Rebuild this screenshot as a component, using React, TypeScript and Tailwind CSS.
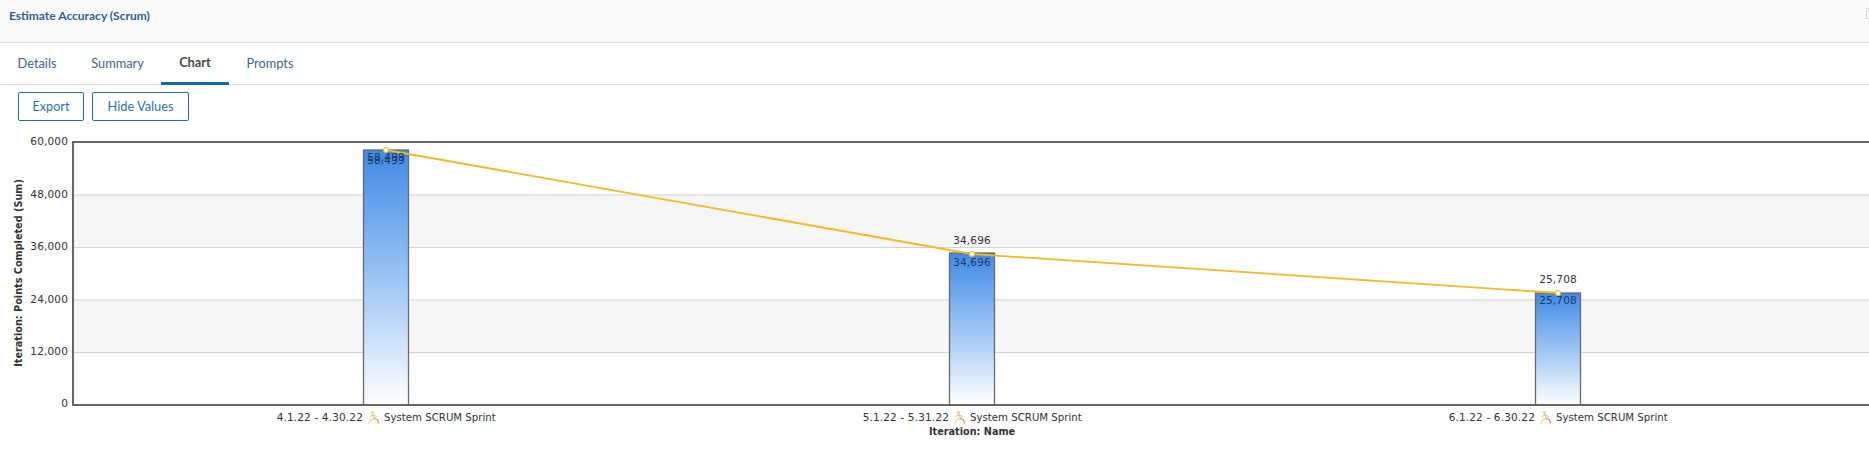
import React from 'react';

const tabs = [
  { label: 'Details', w: 'w-[74px]' },
  { label: 'Summary', w: 'w-[87px]' },
  { label: 'Chart', w: 'w-[68px]', active: true },
  { label: 'Prompts', w: 'w-[82px]' },
];

const ticks = [
  { label: '60,000', y: 142, labelY: 141.5 },
  { label: '48,000', y: 195, labelY: 194.5 },
  { label: '36,000', y: 247.5, labelY: 246.5 },
  { label: '24,000', y: 300, labelY: 299.5 },
  { label: '12,000', y: 352.5, labelY: 351.5 },
  { label: '0', y: 405, labelY: 403 },
];

const bars = [
  { x: 386, top: 150, value: '58,499', range: '4.1.22 - 4.30.22', above: 157, inside: 160 },
  { x: 972, top: 253, value: '34,696', range: '5.1.22 - 5.31.22', above: 240, inside: 262 },
  { x: 1558, top: 293, value: '25,708', range: '6.1.22 - 6.30.22', above: 279, inside: 300 },
];

// little running figure next to the sprint names
function Runner({ x, y }: { x: number; y: number }) {
  return (
    <g transform={`translate(${x} ${y})`} fill="none" strokeLinecap="round" strokeLinejoin="round">
      <circle cx="4.5" cy="1.6" r="1.5" fill="#e8c98f" />
      <path d="M4.5 3 L6.3 7.2 L2.5 9 L1 12" stroke="#ecd9b8" strokeWidth="1.6" />
      <path d="M6.3 7.2 L9.5 9 L10.5 12" stroke="#cfa56a" strokeWidth="1.4" />
      <path d="M4.8 4 L2 5.5 M5.2 4 L8.5 5.5" stroke="#dcbd8c" strokeWidth="1" />
    </g>
  );
}

function Chart() {
  return (
    <svg viewBox="0 130 1869 324" className="block w-[1869px] h-[324px] font-['DejaVu_Sans',sans-serif]">
      <defs>
        <linearGradient id="barFill" x1="0" y1="0" x2="0" y2="1">
          <stop offset="0" stopColor="#3f8ae6" />
          <stop offset="0.55" stopColor="#a5caf5" />
          <stop offset="1" stopColor="#ffffff" />
        </linearGradient>
      </defs>

      <rect x="73" y="195" width="1796" height="52.5" fill="#f6f6f6" />
      <rect x="73" y="300" width="1796" height="52.5" fill="#f6f6f6" />
      {ticks.slice(1, 5).map((t) => (
        <line key={t.label} x1="73" x2="1869" y1={t.y} y2={t.y} stroke="#d2d2d2" strokeWidth="1.2" />
      ))}

      {bars.map((b) => (
        <rect
          key={b.x}
          x={b.x - 22.5}
          y={b.top}
          width="45"
          height={405 - b.top}
          fill="url(#barFill)"
          stroke="#666a70"
          strokeWidth="1.3"
        />
      ))}

      <line x1="73" x2="1869" y1="142" y2="142" stroke="#666" strokeWidth="2" />
      <line x1="73" x2="1869" y1="405" y2="405" stroke="#666" strokeWidth="2" />
      <line x1="73" x2="73" y1="141" y2="406" stroke="#666" strokeWidth="2" />

      <polyline points="386,150 972,254 1558,293" fill="none" stroke="#f1ba1e" strokeWidth="1.8" />
      {bars.map((b) => (
        <circle key={b.x} cx={b.x} cy={b.top + (b.x === 972 ? 1 : 0)} r="2.6" fill="#fdfbe9" stroke="#f1ba1e" strokeWidth="1" />
      ))}

      {ticks.map((t) => (
        <text key={t.label} x="68" y={t.labelY} dy="0.35em" textAnchor="end" fontSize="10.5" letterSpacing="0.15" fill="#333">
          {t.label}
        </text>
      ))}

      {bars.map((b) => (
        <g key={b.x} fontSize="10.5" letterSpacing="0.15">
          <text x={b.x} y={b.above} dy="0.35em" textAnchor="middle" fill={b.above < b.top ? '#333' : '#1c3a5e'}>{b.value}</text>
          <text x={b.x} y={b.inside} dy="0.35em" textAnchor="middle" fill="#1c3a5e">{b.value}</text>
          <text x={b.x - 23} y="417.5" dy="0.35em" textAnchor="end" fill="#333">{b.range}</text>
          <Runner x={b.x - 18} y={411} />
          <text x={b.x - 2} y="417.5" dy="0.35em" fontSize="10.2" letterSpacing="0" fill="#333">System SCRUM Sprint</text>
        </g>
      ))}

      <text x="972" y="431.5" dy="0.35em" textAnchor="middle" fontSize="9.7" fontWeight="700" fill="#333">Iteration: Name</text>
      <text transform="translate(19 273) rotate(-90)" dy="0.35em" textAnchor="middle" fontSize="9.7" fontWeight="700" fill="#333">
        Iteration: Points Completed (Sum)
      </text>
    </svg>
  );
}

export default function App() {
  return (
    <div className="w-[1869px] h-[454px] overflow-hidden bg-white font-['Lato',sans-serif]">
      <div className="h-[43px] bg-[#fafafa] border-b border-[#e0e0e0] flex justify-between pl-[9px]">
        <span className="mt-[8px] text-[12px] leading-[15px] font-bold text-[#2f5d94]">Estimate Accuracy (Scrum)</span>
        <span className="mt-[8px] -mr-[8px] w-[11px] h-[11px] border border-[#cfd6e0] rounded-[2px]" />
      </div>

      <div className="h-[42px] border-b border-[#e0e0e0] flex">
        {tabs.map((t) => (
          <div
            key={t.label}
            className={
              t.active
                ? `${t.w} -mb-px flex items-center justify-center pt-[1px] text-[12.8px] font-bold text-[#4a4a4a] border-b-[3px] border-[#1565b8]`
                : `${t.w} flex items-center justify-center text-[12.8px] text-[#41658f]`
            }
          >
            {t.label}
          </div>
        ))}
      </div>

      <div className="h-[45px] flex gap-2 pl-[18px] pt-[7px]">
        <button className="w-[66px] h-[29px] pt-[1px] rounded-[2px] border border-[#1f6db5] text-[12.6px] text-[#2a72bb]">Export</button>
        <button className="w-[97px] h-[29px] pt-[1px] rounded-[2px] border border-[#1f6db5] text-[12.8px] text-[#2a72bb]">Hide Values</button>
      </div>

      <Chart />
    </div>
  );
}
